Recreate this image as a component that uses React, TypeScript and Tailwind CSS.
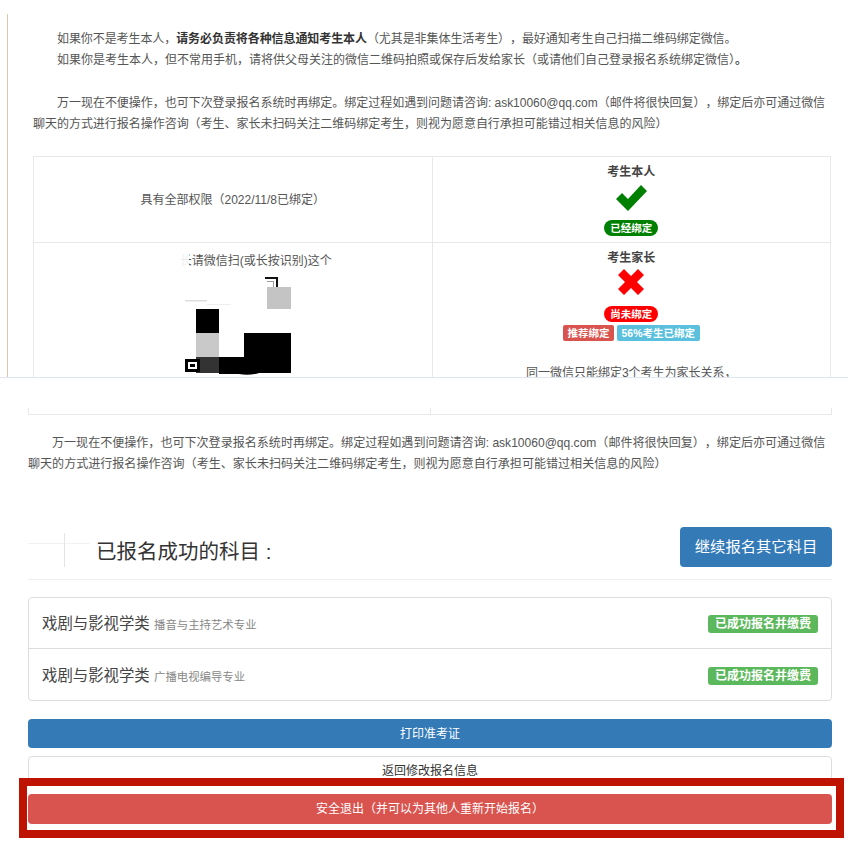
const font = "font-['Liberation_Sans','Noto_Sans_CJK_SC',sans-serif]"

function QrSmudge() {
  return (
    <svg width="106" height="100" viewBox="0 0 106 100" className="mx-auto mt-[7px] block">
      <rect x="0" y="0" width="106" height="100" fill="#fff" />
      <rect x="0" y="23" width="22" height="1.5" fill="#ddd" />
      <rect x="22" y="27" width="24" height="1" fill="#eee" />
      <path d="M80 0h13v19h-2V2H80z" fill="#111" />
      <path d="M82 4h7v12h-1V5h-6z" fill="#999" />
      <path d="M82 10h24v22H82z" fill="#c4c4c4" />
      <rect x="11" y="32" width="23" height="24" fill="#000" />
      <rect x="11" y="56" width="23" height="24" fill="#c9c9c9" />
      <rect x="11" y="80" width="24" height="16" fill="#333" />
      <rect x="34" y="80" width="26" height="17" fill="#000" />
      <path d="M59 56h47v40H74q-10 3-20 1l5-17z" fill="#000" />
      <path d="M0 82h15v13H0z" fill="#000" />
      <path d="M3 85h9v7H3z" fill="#fff" />
      <path d="M5 87h5v3H5z" fill="#000" />
    </svg>
  )
}

function Pill({ className, children }: { className: string; children: string }) {
  return (
    <span className={`inline-block rounded-[8px] px-[6px] text-[10.5px] leading-[16px] font-bold text-white ${className}`}>
      {children}
    </span>
  )
}

function Tag({ className, children }: { className: string; children: string }) {
  return (
    <span className={`inline-block rounded-[2px] px-[4.5px] text-[10.5px] leading-[16px] font-bold text-white ${className}`}>
      {children}
    </span>
  )
}

function Paragraph({ className }: { className: string }) {
  return (
    <p className={`leading-[21px] indent-[24px] text-[#555] [text-spacing-trim:space-all] ${className}`}>
      万一现在不便操作，也可下次登录报名系统时再绑定。绑定过程如遇到问题请咨询: ask10060@qq.com（邮件将很快回复），绑定后亦可通过微信聊天的方式进行报名操作咨询（考生、家长未扫码关注二维码绑定考生，则视为愿意自行承担可能错过相关信息的风险）
    </p>
  )
}

function TopFragment() {
  return (
    <section className="h-[378px] overflow-hidden border-b border-[#dfe6f2]">
      <div className="ml-[7px] mt-[14px] h-[364px] overflow-hidden border-l border-[#d8c8ae] pl-[25px] pr-[17px] pt-[15px]">
        <p className="text-[12px] leading-[21px] indent-[24px] tracking-[-0.08px] text-[#555] [text-spacing-trim:space-all]">
          如果你不是考生本人，<b className="text-[#333]">请务必负责将各种信息通知考生本人</b>（尤其是非集体生活考生），最好通知考生自己扫描二维码绑定微信。
        </p>
        <p className="text-[12px] leading-[21px] indent-[24px] text-[#555]">
          如果你是考生本人，但不常用手机，请将供父母关注的微信二维码拍照或保存后发给家长（或请他们自己登录报名系统绑定微信）<b>。</b>
        </p>
        <Paragraph className="mt-[22px] text-[12px] tracking-[-0.03px]" />
        <div className="mt-[21px] grid grid-cols-2 border-l border-t border-[#e8e8e8] text-[12px] text-[#555]">
          <div className="flex h-[86px] items-center justify-center border-b border-r border-[#e8e8e8]">
            具有全部权限（2022/11/8已绑定）
          </div>
          <div className="flex h-[86px] flex-col items-center border-b border-r border-[#e8e8e8] pt-[7px]">
            <b className="leading-[17px] text-[#444]">考生本人</b>
            <svg width="32" height="28" viewBox="0 0 32 28" className="ml-[1px] mt-[3px]">
              <path d="M0 15 L6 9 L12 15 L25 1 L31 7 L12 27 Z" fill="#008000" />
            </svg>
            <span className="mt-[7px]">
              <Pill className="bg-[#008000]">已经绑定</Pill>
            </span>
          </div>
          <div className="flex flex-col items-center border-r border-[#e8e8e8] pl-[10px] pt-[10px]">
            <div className="relative leading-[17px]">
              <span className="text-white">考生家</span>长请微信扫(或长按识别)这个
              <span className="absolute inset-y-0 left-0 w-[45px] bg-white/90" />
            </div>
            <QrSmudge />
          </div>
          <div className="flex flex-col items-center border-r border-[#e8e8e8] pt-[7px]">
            <b className="leading-[17px] text-[#444]">考生家长</b>
            <svg width="26" height="26" viewBox="0 0 26 26" className="mt-[2px]">
              <path d="M6 0 L13 7 L20 0 L26 6 L19 13 L26 20 L20 26 L13 19 L6 26 L0 20 L7 13 L0 6 Z" fill="#ff0000" />
            </svg>
            <span className="mt-[10px]">
              <Pill className="bg-[#ff0000]">尚未绑定</Pill>
            </span>
            <div className="mt-[2px] flex gap-[3px]">
              <Tag className="bg-[#d9534f]">推荐绑定</Tag>
              <Tag className="bg-[#5bc0de]">56%考生已绑定</Tag>
            </div>
            <div className="mt-[24px] leading-[17px]">同一微信只能绑定3个考生为家长关系，</div>
          </div>
        </div>
      </div>
    </section>
  )
}

function SubjectRow({ major, last }: { major: string; last?: boolean }) {
  return (
    <div className={`flex h-[51px] items-center justify-between px-[13px] pt-[2px] ${last ? "" : "border-b border-[#ddd]"}`}>
      <div className="text-[15.4px] text-[#444]">
        戏剧与影视学类 <span className="text-[11.4px] text-[#888]">{major}</span>
      </div>
      <span className="rounded-[3px] bg-[#5cb85c] px-[7px] text-[12px] leading-[18px] font-bold text-white">已成功报名并缴费</span>
    </div>
  )
}

function BottomFragment() {
  return (
    <section className="px-[16px]">
      <div className="ml-[12px] flex h-[37px] border-b border-[#e8e8e8]">
        <div className="mt-auto h-[6px] w-[403px] border-l border-r border-[#e8e8e8]" />
        <div className="mt-auto h-[6px] flex-1 border-r border-[#e8e8e8]" />
      </div>
      <Paragraph className="ml-[12px] mt-[18px] text-[12.05px]" />
      <div className="relative ml-[12px] mt-[52px] flex h-[53px] items-start justify-between border-b border-[#eee]">
        <span className="absolute left-0 top-[16px] h-px w-[62px] bg-[#f2f2f2]" />
        <span className="absolute left-[36px] top-[6px] h-[34px] w-px bg-[#e4e4e4]" />
        <div className="pl-[68px] pt-[9px] text-[20.5px] leading-[31px] text-[#333]">已报名成功的科目 :</div>
        <button className="h-[40px] w-[152px] rounded-[4px] bg-[#337ab7] text-[15.3px] text-white">继续报名其它科目</button>
      </div>
      <div className="ml-[12px] mt-[17px] rounded-[4px] border border-[#ddd]">
        <SubjectRow major="播音与主持艺术专业" />
        <SubjectRow major="广播电视编导专业" last />
      </div>
      <button className="ml-[12px] mt-[18px] block h-[29px] w-[804px] rounded-[4px] bg-[#337ab7] text-[12px] text-white">打印准考证</button>
      <button className="ml-[12px] mt-[8px] block h-[29px] w-[804px] rounded-[4px] border border-[#ddd] bg-white text-[12px] text-[#333]">返回修改报名信息</button>
      <button className="ml-[12px] mt-[9px] block h-[30px] w-[804px] rounded-[4px] bg-[#d9534f] text-[12px] text-white [text-spacing-trim:space-all]">安全退出（并可以为其他人重新开始报名）</button>
    </section>
  )
}

export default function App() {
  return (
    <div className={`relative h-[841px] w-[848px] overflow-hidden bg-white ${font}`}>
      <TopFragment />
      <BottomFragment />
      {/* red annotation frame on top of the exit button */}
      <div className="absolute left-[19px] top-[778px] h-[60px] w-[825px] border-[8px] border-[#bd1300]" />
    </div>
  )
}
